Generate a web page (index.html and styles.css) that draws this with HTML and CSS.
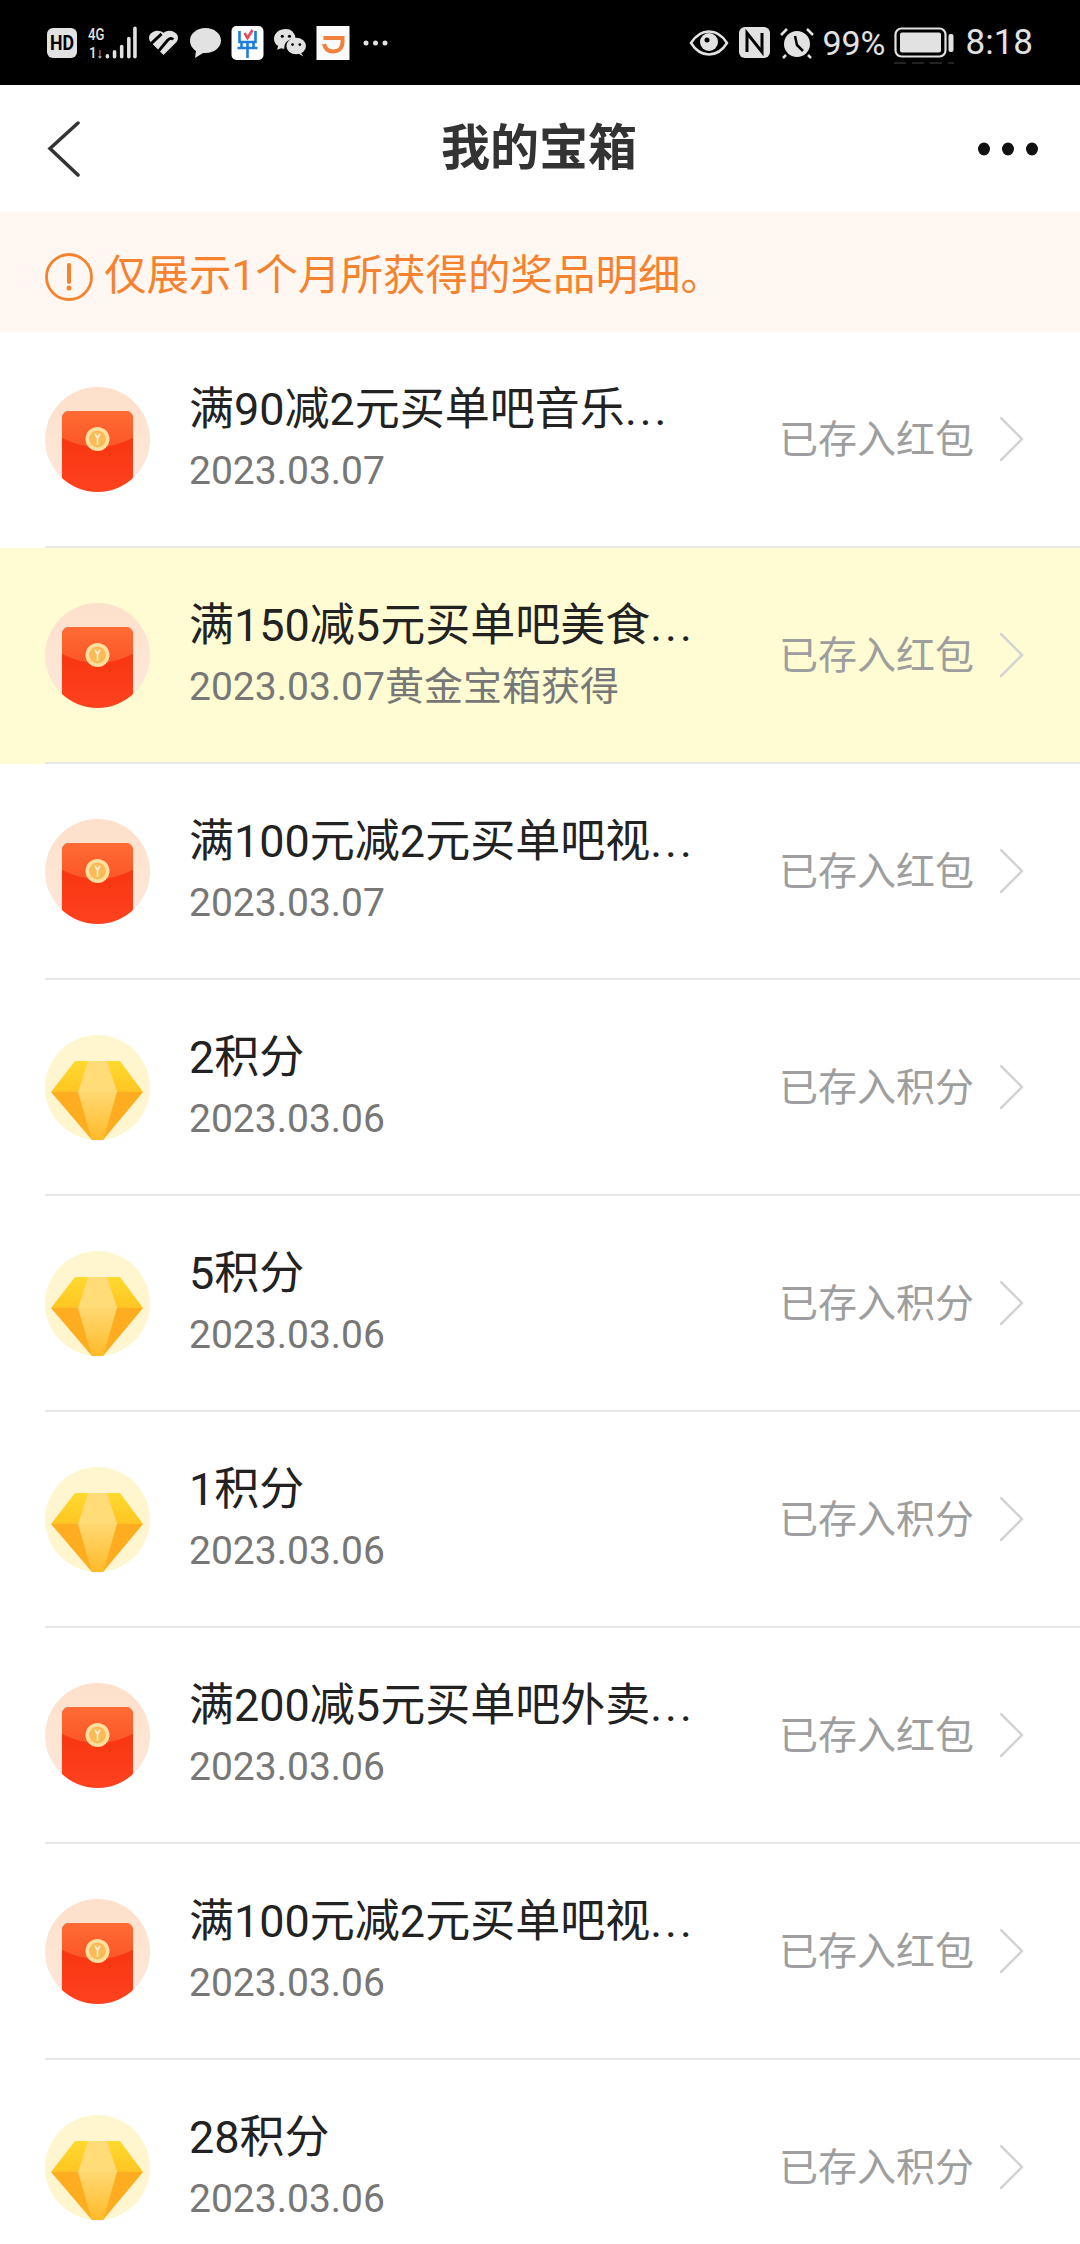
FILE: index.html
```html
<!DOCTYPE html>
<html lang="zh-CN">
<head>
<meta charset="utf-8">
<title>我的宝箱</title>
<link rel="stylesheet" href="styles.css">
</head>
<body>
<svg class="defs" width="0" height="0" aria-hidden="true">
  <defs>
    <linearGradient id="flap" x1="0" y1="0" x2="0" y2="1"><stop offset="0" stop-color="#ff6c34"/><stop offset="1" stop-color="#fb5626"/></linearGradient>
    <linearGradient id="body" x1="0" y1="0" x2="0" y2="1"><stop offset="0" stop-color="#f42e0a"/><stop offset="1" stop-color="#ff421e"/></linearGradient>
    <linearGradient id="bg" x1="0" y1="0" x2="0" y2="1"><stop offset="0" stop-color="#fde0cb"/><stop offset="1" stop-color="#fee9dc"/></linearGradient>
    <linearGradient id="gemtop" x1="0" y1="0" x2="0" y2="1"><stop offset="0" stop-color="#ffd92e"/><stop offset="1" stop-color="#ffc522"/></linearGradient>
    <linearGradient id="gemmid" x1="0" y1="0" x2="0" y2="1"><stop offset="0" stop-color="#ffd873"/><stop offset="1" stop-color="#ffbb2a"/></linearGradient>
    <clipPath id="disc"><circle cx="52.500" cy="52.500" r="52.500"/></clipPath>
    <symbol id="packet" viewBox="0 0 105 105">
      <circle cx="52.500" cy="52.500" r="52.500" fill="url(#bg)"/>
      <g clip-path="url(#disc)">
        <path d="M17 31a7 7 0 0 1 7-7h57a7 7 0 0 1 7 7v74H17z" fill="url(#body)"/>
        <path d="M17 31a7 7 0 0 1 7-7h57a7 7 0 0 1 7 7v20q-35.500 18-71 0z" fill="url(#flap)"/>
      </g>
      <circle cx="52.500" cy="52" r="12" fill="#ffe0a0"/>
      <circle cx="52.500" cy="52" r="8.500" fill="#fbbc58"/>
      <path d="M50 47l2.500 4 2.500-4M52.500 51v7" stroke="#fff3d8" stroke-width="1.500" fill="none"/>
    </symbol>
    <symbol id="gem" viewBox="0 0 105 105">
      <circle cx="52.500" cy="52.500" r="52.500" fill="#fff6d0"/>
      <path d="M30 26H75L98 57H6z" fill="url(#gemtop)"/>
      <path d="M6 57H98L58 105H47z" fill="#ffad20"/>
      <path d="M43 26H62L72 57H33z" fill="#ffdc78"/>
      <path d="M33 57H72L58 105H47z" fill="url(#gemmid)"/>
    </symbol>
    <symbol id="chev" viewBox="0 0 26 46">
      <path d="M2 2L23 23 2 44" fill="none" stroke="#d4d4d4" stroke-width="2.500" stroke-linecap="round"/>
    </symbol>
  </defs>
</svg>

<div class="status">
  <div class="status-side left">
    <svg class="ic" width="30" height="30" viewBox="0 0 30 30"><rect width="30" height="30" rx="6" fill="#e2e2e2"/><text class="hd" x="15" y="22" text-anchor="middle" textLength="24" lengthAdjust="spacingAndGlyphs">HD</text></svg>
    <svg class="ic m1" width="49" height="33" viewBox="0 0 48 32"><text class="sig" x="0" y="14" textLength="16" lengthAdjust="spacingAndGlyphs">4G</text><text class="sig small" x="1" y="31" textLength="14" lengthAdjust="spacingAndGlyphs">1↓</text><g stroke="#e2e2e2" stroke-width="3.500" stroke-linecap="round" fill="none"><path d="M19 30v-1M26 30v-5M33 30v-10M40 30v-18M46 30V2"/></g></svg>
    <svg class="ic m1" width="31" height="27" viewBox="0 0 32 28"><path d="M16 27L2 13Q-1 6 5 3 11 0 16 4 21 0 27 3 33 6 30 13z" fill="#e2e2e2"/><path d="M-1 19L14 5M10 24L20 12Q24 8 26 11" stroke="#000" stroke-width="3" fill="none"/></svg>
    <svg class="ic m1" width="31" height="32" viewBox="0 0 31 32"><path d="M15.500 1C7 1 0 6.500 0 13.500 0 18.500 3 22 6 24L5 31 13 26H15.500C24 26 31 20.500 31 13.500S24 1 15.500 1z" fill="#e2e2e2"/></svg>
    <svg class="ic" width="33" height="34" viewBox="0 0 32 34"><rect width="32" height="34" rx="5" fill="#fff"/><path d="M8 5v11h16V5M16 16v16M6 22h20M10 16v6M22 16v6" stroke="#1d7fd8" stroke-width="2.600" fill="none"/><path d="M13 7l3 5 5-8" stroke="#ea4a5c" stroke-width="2.600" fill="none"/></svg>
    <svg class="ic" width="32" height="28" viewBox="0 0 31 27"><path d="M11.500 0C5 0 0 4 0 9.500 0 12.500 1.500 15 4 16.500L3 20 7 18.500Q9 19 10 19 9.500 10 21 9.500 19.500 0 11.500 0z" fill="#e2e2e2"/><ellipse cx="21.500" cy="16.500" rx="9.500" ry="8" fill="#e2e2e2"/><path d="M26 23l2.500 3.500L24 24z" fill="#e2e2e2"/><g fill="#000"><circle cx="8" cy="7" r="1.500"/><circle cx="15" cy="7" r="1.500"/><circle cx="18" cy="15" r="1.300"/><circle cx="25" cy="15" r="1.300"/></g></svg>
    <svg class="ic" width="34" height="34" viewBox="0 0 33 34"><rect width="33" height="34" fill="#fafafa"/><path d="M7 12H26V16C26 22 22 25.500 16.500 25.500 11.500 25.500 8.500 22.500 7.500 18" stroke="#f0803c" stroke-width="4" fill="none"/></svg>
    <svg class="ic dots" width="25" height="6" viewBox="0 0 25 6"><circle cx="3" cy="3" r="2.500" fill="#e2e2e2"/><circle cx="12.500" cy="3" r="2.500" fill="#e2e2e2"/><circle cx="22" cy="3" r="2.500" fill="#e2e2e2"/></svg>
  </div>
  <div class="status-side right">
    <svg class="ic" width="38" height="26" viewBox="0 0 38 26"><path d="M1 13C6 5 12 1.500 19 1.500S32 5 37 13C32 21 26 24.500 19 24.500S6 21 1 13z" fill="none" stroke="#e2e2e2" stroke-width="2.500"/><circle cx="19" cy="12" r="9" fill="#e2e2e2"/><circle cx="17" cy="10" r="2.500" fill="#000"/></svg>
    <svg class="ic m1" width="31" height="31" viewBox="0 0 31 31"><rect width="31" height="31" rx="6" fill="#e2e2e2"/><path d="M8 25V6L23 25V6" stroke="#000" stroke-width="3" fill="none"/></svg>
    <svg class="ic" width="34" height="32" viewBox="0 0 34 32"><circle cx="17" cy="17" r="13" fill="#e2e2e2"/><path d="M1 8L7 2M33 8L27 2M6 28L3 31M28 28L31 31" stroke="#e2e2e2" stroke-width="2.500"/><path d="M15 9L17 18 23 24" stroke="#000" stroke-width="2.500" fill="none"/></svg>
    <span class="pct">99%</span>
    <svg class="ic batt" width="60" height="32" viewBox="0 0 60 32"><rect x="1.500" y="1.500" width="50" height="28" rx="6" fill="none" stroke="#e2e2e2" stroke-width="2.200"/><rect x="6" y="5.500" width="41" height="20" rx="2" fill="#e2e2e2"/><rect x="54.500" y="7" width="5" height="18" rx="2" fill="#e2e2e2"/><path d="M0 36H60" stroke="#444" stroke-width="1" stroke-dasharray="12 6"/></svg>
    <span class="time">8:18</span>
  </div>
</div>

<header class="nav">
  <svg class="back" width="34" height="56" viewBox="0 0 34 56"><path d="M31 2L3 27.500 31 54" fill="none" stroke="#333" stroke-width="3.500" stroke-linecap="round"/></svg>
  <h1 class="title">我的宝箱</h1>
  <svg class="more" width="60" height="14" viewBox="0 0 60 14"><ellipse cx="6" cy="7" rx="6" ry="6.500" fill="#111"/><ellipse cx="30" cy="7" rx="6" ry="6.500" fill="#111"/><ellipse cx="54" cy="7" rx="6" ry="6.500" fill="#111"/></svg>
</header>

<div class="notice">
  <svg class="notice-ic" width="48" height="48" viewBox="0 0 48 48"><circle cx="24" cy="24" r="22.500" fill="none" stroke="#f5822f" stroke-width="2.800"/><path d="M24 12v17" stroke="#f5822f" stroke-width="4" stroke-linecap="round"/><circle cx="24" cy="35" r="2.500" fill="#f5822f"/></svg>
  <span class="notice-text">仅展示1个月所获得的奖品明细。</span>
</div>

<main class="list">
  <div class="row"><div class="row-in"><svg class="thumb"><use href="#packet"/></svg><div class="info"><div class="name">满90减2元买单吧音乐<span class="ell">...</span></div><div class="date">2023.03.07</div></div><div class="state">已存入红包</div><svg class="chev"><use href="#chev"/></svg></div></div>
  <div class="row hot"><div class="row-in"><svg class="thumb"><use href="#packet"/></svg><div class="info"><div class="name">满150减5元买单吧美食<span class="ell">...</span></div><div class="date">2023.03.07黄金宝箱获得</div></div><div class="state">已存入红包</div><svg class="chev"><use href="#chev"/></svg></div></div>
  <div class="row"><div class="row-in"><svg class="thumb"><use href="#packet"/></svg><div class="info"><div class="name">满100元减2元买单吧视<span class="ell">...</span></div><div class="date">2023.03.07</div></div><div class="state">已存入红包</div><svg class="chev"><use href="#chev"/></svg></div></div>
  <div class="row"><div class="row-in"><svg class="thumb"><use href="#gem"/></svg><div class="info"><div class="name">2积分</div><div class="date">2023.03.06</div></div><div class="state">已存入积分</div><svg class="chev"><use href="#chev"/></svg></div></div>
  <div class="row"><div class="row-in"><svg class="thumb"><use href="#gem"/></svg><div class="info"><div class="name">5积分</div><div class="date">2023.03.06</div></div><div class="state">已存入积分</div><svg class="chev"><use href="#chev"/></svg></div></div>
  <div class="row"><div class="row-in"><svg class="thumb"><use href="#gem"/></svg><div class="info"><div class="name">1积分</div><div class="date">2023.03.06</div></div><div class="state">已存入积分</div><svg class="chev"><use href="#chev"/></svg></div></div>
  <div class="row"><div class="row-in"><svg class="thumb"><use href="#packet"/></svg><div class="info"><div class="name">满200减5元买单吧外卖<span class="ell">...</span></div><div class="date">2023.03.06</div></div><div class="state">已存入红包</div><svg class="chev"><use href="#chev"/></svg></div></div>
  <div class="row"><div class="row-in"><svg class="thumb"><use href="#packet"/></svg><div class="info"><div class="name">满100元减2元买单吧视<span class="ell">...</span></div><div class="date">2023.03.06</div></div><div class="state">已存入红包</div><svg class="chev"><use href="#chev"/></svg></div></div>
  <div class="row"><div class="row-in"><svg class="thumb"><use href="#gem"/></svg><div class="info"><div class="name">28积分</div><div class="date">2023.03.06</div></div><div class="state">已存入积分</div><svg class="chev"><use href="#chev"/></svg></div></div>
</main>
</body>
</html>
```
FILE: styles.css
```css
* { box-sizing: border-box; }
html, body { margin: 0; padding: 0; height: 2244px; overflow: hidden; background: #fff; }
body { font-family: "Roboto", "Noto Sans CJK SC", sans-serif; color: #222; }
.defs { position: absolute; }
.ic { display: block; flex: none; overflow: visible; }
.m1 { margin-left: 1px; }

.status { height: 85px; background: #000; display: flex; justify-content: space-between; align-items: center; padding: 0 47px; color: #e2e2e2; }
.status-side { display: flex; align-items: center; gap: 10px; }
.hd { font: 700 20px "Roboto", sans-serif; fill: #000; }
.sig { font: 500 17px "Roboto", sans-serif; fill: #e2e2e2; }
.small { font-size: 14px; }
.dots { margin-left: 3px; }
.pct { font-size: 34px; font-weight: 400; line-height: 1; margin-left: -2px; }
.batt { margin-left: -2px; }
.time { font-size: 35px; font-weight: 400; line-height: 1; margin-left: 2px; }

.nav { height: 127px; display: flex; align-items: center; justify-content: space-between; padding: 0 42px 0 47px; position: relative; background: #fff; }
.back, .more { display: block; flex: none; }
.title { margin: 0; font-size: 49px; font-weight: 700; color: #333; line-height: 1; position: absolute; left: 0; right: 2px; text-align: center; }
.notice { height: 120px; background: #fff8f2; display: flex; align-items: center; gap: 11px; padding: 10px 0 0 45px; color: #f5822f; font-size: 42.500px; }
.notice-ic { flex: none; }
.notice-text { margin-top: -12px; }

.row { height: 216px; }
.hot { background: #fffcd3; }
.row-in { height: 216px; margin-left: 45px; border-bottom: 2px solid #e8e8e8; display: flex; align-items: center; padding-right: 55px; }
.thumb { width: 105px; height: 105px; flex: none; }
.info { flex: 1; min-width: 0; margin-left: 39px; display: flex; flex-direction: column; gap: 12px; }
.name { font-size: 45px; line-height: 52px; color: #222; white-space: nowrap; }
.ell { letter-spacing: 3px; }
.date { font-size: 39px; line-height: 46px; color: #777; white-space: nowrap; }
.state { font-size: 39px; color: #9e9e9e; line-height: 1; flex: none; margin-top: 2px; }
.chev { width: 26px; height: 46px; flex: none; margin-left: 25px; }
```
